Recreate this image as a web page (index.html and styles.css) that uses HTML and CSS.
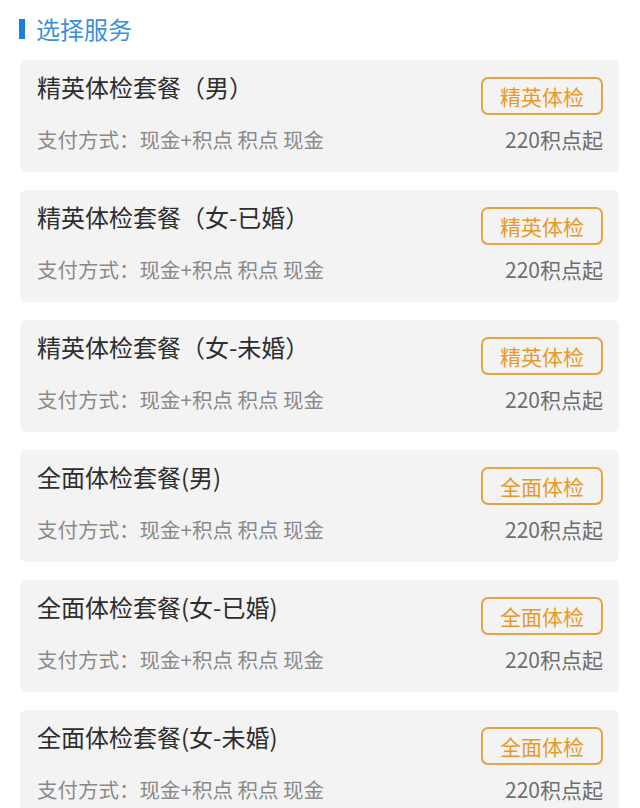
FILE: index.html
```html
<!DOCTYPE html>
<html lang="zh-CN">
<head>
    <meta charset="UTF-8">
    <meta name="viewport" content="width=device-width, initial-scale=1.0">
    <title>选择服务</title>
    <link rel="stylesheet" href="styles.css">
</head>
<body>
    <div class="page">
        <h2 class="section-title">选择服务</h2>

        <div class="service">
            <div class="service-name">精英体检套餐（男）</div>
            <span class="tag">精英体检</span>
            <div class="pay">支付方式：现金+积点 积点 现金</div>
            <div class="price">220积点起</div>
        </div>
        <div class="service">
            <div class="service-name">精英体检套餐（女-已婚）</div>
            <span class="tag">精英体检</span>
            <div class="pay">支付方式：现金+积点 积点 现金</div>
            <div class="price">220积点起</div>
        </div>
        <div class="service">
            <div class="service-name">精英体检套餐（女-未婚）</div>
            <span class="tag">精英体检</span>
            <div class="pay">支付方式：现金+积点 积点 现金</div>
            <div class="price">220积点起</div>
        </div>
        <div class="service">
            <div class="service-name">全面体检套餐(男)</div>
            <span class="tag">全面体检</span>
            <div class="pay">支付方式：现金+积点 积点 现金</div>
            <div class="price">220积点起</div>
        </div>
        <div class="service">
            <div class="service-name">全面体检套餐(女-已婚)</div>
            <span class="tag">全面体检</span>
            <div class="pay">支付方式：现金+积点 积点 现金</div>
            <div class="price">220积点起</div>
        </div>
        <div class="service">
            <div class="service-name">全面体检套餐(女-未婚)</div>
            <span class="tag">全面体检</span>
            <div class="pay">支付方式：现金+积点 积点 现金</div>
            <div class="price">220积点起</div>
        </div>
    </div>
</body>
</html>
```

FILE: styles.css
```css
body {
    margin: 0;
    background: #ffffff;
    font-family: "Noto Sans CJK SC", "Noto Sans", sans-serif;
    color: #333333;
}
.page {
    padding: 14px 21px 0 20px;
    display: flex;
    flex-direction: column;
    gap: 18px;
}
.section-title {
    margin: 0 0 -2px;
    display: flex;
    align-items: center;
    gap: 11px;
    font-size: 24px;
    font-weight: normal;
    line-height: 30px;
    color: #3b8fdc;
}
.section-title::before {
    content: "";
    width: 6px;
    height: 20px;
    background: #1a7ee0;
    margin-left: -1px;
}
.service {
    background: #f3f3f3;
    border-radius: 6px;
    padding: 17px 16px 21px 17px;
    display: grid;
    grid-template-columns: 1fr auto;
    row-gap: 12px;
    align-items: center;
}
.service-name {
    font-size: 24px;
    line-height: 26px;
    margin-top: -3px;
    align-self: start;
    color: #2e2e2e;
}
.tag {
    justify-self: end;
    border: 2px solid #e3a443;
    border-radius: 7px;
    color: #e79a2a;
    font-size: 21px;
    line-height: 34px;
    padding: 0 17px;
}
.pay {
    font-size: 20.5px;
    line-height: 24px;
    color: #8a8a8a;
}
.price {
    font-size: 21px;
    line-height: 24px;
    color: #6e6e6e;
    text-align: right;
}
```
